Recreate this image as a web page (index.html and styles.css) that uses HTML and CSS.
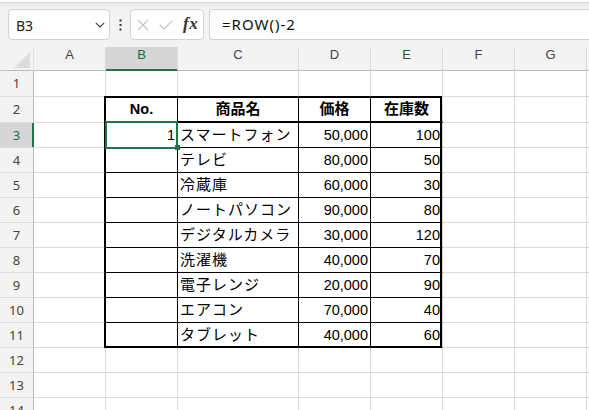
FILE: index.html
```html
<!DOCTYPE html>
<html lang="ja">
<head>
<meta charset="utf-8">
<title>Sheet</title>
<link rel="stylesheet" href="styles.css">
</head>
<body>
<div class="top"></div>
<div class="fbar">
  <div class="namebox"><span>B3</span>
    <svg class="chev" width="10" height="6" viewBox="0 0 10 6"><path d="M0.8 0.8 L5 5 L9.2 0.8" fill="none" stroke="#444" stroke-width="1.2"/></svg>
  </div>
  <div class="kebab">
    <svg width="3" height="12" viewBox="0 0 3 12"><rect x="0.5" y="0.5" width="2" height="2" fill="#333"/><rect x="0.5" y="5" width="2" height="2" fill="#333"/><rect x="0.5" y="9.5" width="2" height="2" fill="#333"/></svg>
  </div>
  <div class="fnbox">
    <svg class="ic-x" width="12" height="12" viewBox="0 0 12 12"><path d="M1 1 L11 11 M11 1 L1 11" stroke="#c4c4c4" stroke-width="1.2" fill="none"/></svg>
    <svg class="ic-ok" width="14" height="10" viewBox="0 0 14 10"><path d="M0.7 4.8 L5 9 L13.3 0.7" stroke="#c4c4c4" stroke-width="1.2" fill="none"/></svg>
    <span class="fx">fx</span>
  </div>
  <div class="formula">=ROW()-2</div>
</div>
<div class="sheet">
  <div class="corner"><svg width="16" height="16" viewBox="0 0 16 16"><path d="M16 0 L16 16 L0 16 Z" fill="#dcdcdc"/></svg></div>
  <div class="ch">A</div><div class="ch sel">B</div><div class="ch">C</div><div class="ch">D</div><div class="ch">E</div><div class="ch">F</div><div class="ch">G</div><div class="ch"></div>

  <div class="rh">1</div><div class="c"></div><div class="c"></div><div class="c"></div><div class="c"></div><div class="c"></div><div class="c"></div><div class="c"></div><div class="c"></div>

  <div class="rh">2</div><div class="c"></div><div class="c tb h2 hd">No.</div><div class="c tb h2 hd"><span class="j">商品名</span></div><div class="c tb h2 hd"><span class="j">価格</span></div><div class="c tr h2 hd"><span class="j">在庫数</span></div><div class="c"></div><div class="c"></div><div class="c"></div>

  <div class="rh sel">3</div><div class="c"></div><div class="c tb n">1</div><div class="c tb"><span class="j d">スマートフォン</span></div><div class="c tb n">50,000</div><div class="c tr n">100</div><div class="c"></div><div class="c"></div><div class="c"></div>

  <div class="rh">4</div><div class="c"></div><div class="c tb"></div><div class="c tb"><span class="j d">テレビ</span></div><div class="c tb n">80,000</div><div class="c tr n">50</div><div class="c"></div><div class="c"></div><div class="c"></div>

  <div class="rh">5</div><div class="c"></div><div class="c tb"></div><div class="c tb"><span class="j d">冷蔵庫</span></div><div class="c tb n">60,000</div><div class="c tr n">30</div><div class="c"></div><div class="c"></div><div class="c"></div>

  <div class="rh">6</div><div class="c"></div><div class="c tb"></div><div class="c tb"><span class="j d">ノートパソコン</span></div><div class="c tb n">90,000</div><div class="c tr n">80</div><div class="c"></div><div class="c"></div><div class="c"></div>

  <div class="rh">7</div><div class="c"></div><div class="c tb"></div><div class="c tb"><span class="j d">デジタルカメラ</span></div><div class="c tb n">30,000</div><div class="c tr n">120</div><div class="c"></div><div class="c"></div><div class="c"></div>

  <div class="rh">8</div><div class="c"></div><div class="c tb"></div><div class="c tb"><span class="j d">洗濯機</span></div><div class="c tb n">40,000</div><div class="c tr n">70</div><div class="c"></div><div class="c"></div><div class="c"></div>

  <div class="rh">9</div><div class="c"></div><div class="c tb"></div><div class="c tb"><span class="j d">電子レンジ</span></div><div class="c tb n">20,000</div><div class="c tr n">90</div><div class="c"></div><div class="c"></div><div class="c"></div>

  <div class="rh">10</div><div class="c"></div><div class="c tb"></div><div class="c tb"><span class="j d">エアコン</span></div><div class="c tb n">70,000</div><div class="c tr n">40</div><div class="c"></div><div class="c"></div><div class="c"></div>

  <div class="rh">11</div><div class="c"></div><div class="c tb"></div><div class="c tb"><span class="j d">タブレット</span></div><div class="c tb n">40,000</div><div class="c tr n">60</div><div class="c"></div><div class="c"></div><div class="c"></div>

  <div class="rh">12</div><div class="c"></div><div class="c"></div><div class="c"></div><div class="c"></div><div class="c"></div><div class="c"></div><div class="c"></div><div class="c"></div>

  <div class="rh">13</div><div class="c"></div><div class="c"></div><div class="c"></div><div class="c"></div><div class="c"></div><div class="c"></div><div class="c"></div><div class="c"></div>

  <div class="rh">14</div><div class="c"></div><div class="c"></div><div class="c"></div><div class="c"></div><div class="c"></div><div class="c"></div><div class="c"></div><div class="c"></div>

  <div class="outline"></div>
  <div class="selection"></div>
  <div class="handle"></div>
</div>
</body>
</html>
```

FILE: styles.css
```css
* { box-sizing: border-box; }
html, body { margin: 0; padding: 0; }
body {
  width: 589px;
  height: 410px;
  overflow: hidden;
  background: #ffffff;
  font-family: "Noto Sans", "Liberation Sans", sans-serif;
}

.top {
  position: relative;
  z-index: 1;
  height: 3px;
  background: #fbfbfb;
  border-bottom: 1px solid #d9d9d9;
  box-shadow: 0 1px 4px rgba(0, 0, 0, 0.10);
}

.fbar {
  display: flex;
  height: 44px;
  padding: 6px 0 7px 8px;
  background: #f3f3f3;
}

.namebox {
  width: 102px;
  background: #fff;
  border: 1px solid #d2d2d2;
  border-radius: 4px;
  display: flex;
  align-items: center;
  justify-content: space-between;
  padding: 2px 4px 0 7px;
  font-size: 14px;
  color: #222;
}
.chev { margin-top: -2px; }

.kebab {
  width: 20px;
  display: flex;
  align-items: center;
  justify-content: center;
  padding-left: 1px;
}

.fnbox {
  width: 74px;
  margin-right: 5px;
  background: #fff;
  border: 1px solid #d2d2d2;
  border-radius: 4px;
  display: flex;
  align-items: center;
  padding-left: 6px;
}
.ic-x { margin-right: 10px; }
.ic-ok { margin-right: 10px; margin-top: 1px; }
.fx {
  font-family: "Liberation Serif", serif;
  font-style: italic;
  font-weight: bold;
  font-size: 17px;
  color: #333;
  letter-spacing: 0.5px;
  margin-top: -2px;
}

.formula {
  flex: 1;
  margin-right: -8px;
  background: #fff;
  border: 1px solid #d2d2d2;
  border-right: none;
  border-radius: 4px 0 0 4px;
  padding-left: 12px;
  display: flex;
  align-items: center;
  font-size: 15px;
  letter-spacing: 1px;
  color: #111;
  padding-bottom: 1px;
}

.sheet {
  position: relative;
  width: 589px;
  overflow: hidden;
  display: grid;
  grid-template-columns: 34px 72px 72px 121px 72px 72px 72px 72px 72px;
  grid-template-rows: 24px 26px 26px repeat(12, 25px);
}

.corner {
  background: #f3f3f3;
  border-right: 1px solid #e2e2e2;
  border-bottom: 1px solid #bdbdbd;
  display: flex;
  justify-content: flex-end;
  align-items: flex-end;
  padding: 0 3px 2px 0;
}

.ch {
  background: #f3f3f3;
  border-right: 1px solid #d9d9d9;
  border-bottom: 1px solid #bdbdbd;
  text-align: center;
  font-family: "Liberation Sans", sans-serif;
  font-size: 13px;
  line-height: 15px;
  color: #444;
}
.ch.sel {
  background: #d6d6d6;
  color: #1d6b41;
  border-bottom-color: #217346;
  box-shadow: inset 0 -1px 0 #217346;
}

.rh {
  background: #f3f3f3;
  border-right: 1px solid #bcbcbc;
  border-bottom: 1px solid #dddddd;
  text-align: center;
  font-size: 13px;
  line-height: 24px;
  color: #444;
}
.rh.sel {
  background: #d6d6d6;
  color: #1d6b41;
  border-right-color: #217346;
  box-shadow: inset -1px 0 0 #217346;
}

.c {
  border-right: 1px solid #dadada;
  border-bottom: 1px solid #dadada;
  font-family: "Liberation Sans", "Noto Sans CJK JP", sans-serif;
  font-size: 14.5px;
  line-height: 24px;
  padding: 0 2px;
  white-space: nowrap;
  overflow: hidden;
  color: #000;
}
.c.tb { border-right-color: #000; border-bottom-color: #000; }
.c.tr { border-bottom-color: #000; }
.c.h2 { border-bottom-width: 2px; }
.c.hd { font-weight: bold; text-align: center; }
.c.n { text-align: right; }

.j {
  font-family: "Noto Sans CJK JP", sans-serif;
  font-size: 15px;
  line-height: 15px;
}
.j.d { letter-spacing: 1px; }

.outline {
  position: absolute;
  left: 104px;
  top: 49px;
  width: 338px;
  height: 252px;
  border: 2px solid #000;
  pointer-events: none;
}
.selection {
  position: absolute;
  left: 105px;
  top: 74px;
  width: 73px;
  height: 28px;
  border: 2px solid #217346;
}
.handle {
  position: absolute;
  left: 175px;
  top: 98px;
  width: 5px;
  height: 5px;
  background: #217346;
}
```
